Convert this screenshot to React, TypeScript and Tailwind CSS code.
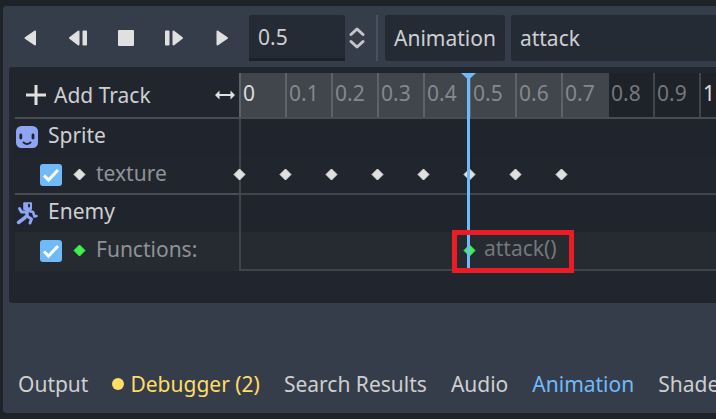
import type { ReactNode } from "react"
import { useState } from "react"

const STEP = 46

const ticks = ["0", "0.1", "0.2", "0.3", "0.4", "0.5", "0.6", "0.7", "0.8", "0.9", "1"]
const textureKeys = [0, 1, 2, 3, 4, 5, 6, 7]

const transport = [
  { label: "Play backwards", shape: <path d="M17 5.5 7.5 12l9.5 6.5z" /> },
  {
    label: "Play backwards from current position",
    shape: (
      <>
        <path d="M12.500 5.500 4 12l8.500 6.500z" />
        <path d="M17.500 5.500h2.500v13h-2.500z" />
      </>
    ),
  },
  { label: "Stop", shape: <path d="M5 5h14v14H5z" /> },
  {
    label: "Play from current position",
    shape: (
      <>
        <path d="M11.500 5.500 20 12l-8.500 6.500z" />
        <path d="M4 5.500h2.500v13H4z" />
      </>
    ),
  },
  { label: "Play", shape: <path d="M7.500 5.500 17 12l-9.500 6.500z" /> },
]

const tabs = ["Output", "Debugger (2)", "Search Results", "Audio", "Animation", "Shader"]

const Diamond = ({ className = "" }: { className?: string }) => (
  <svg viewBox="0 0 13 13" className={`size-[13px] shrink-0 ${className}`} fill="currentColor" stroke="currentColor" strokeLinejoin="round">
    <path d="M6.5 1 12 6.5 6.5 12 1 6.5z" />
  </svg>
)

const SpriteIcon = () => (
  <svg viewBox="0 0 24 24" className="size-6 shrink-0">
    <rect x="1" y="1" width="22" height="22" rx="5.5" fill="#8da5f3" />
    <g fill="none" stroke="#21262e" strokeLinecap="round">
      <path d="M5.8 10v3M18 10v3" strokeWidth="2.8" />
      <path d="M8.5 17.5q3.5 3 7 0" strokeWidth="2" />
    </g>
  </svg>
)

const BodyIcon = () => (
  <svg viewBox="0 0 24 24" className="size-6 shrink-0" fill="none" stroke="#8da5f3" strokeWidth="3" strokeLinecap="round" strokeLinejoin="round">
    <rect x="8.200" y="1.200" width="8.800" height="7.800" rx="1" fill="#8da5f3" stroke="none" />
    <path d="M4.500 7.500 6.500 11h5" />
    <path d="M12 9.500v5L9.500 17l-6 4.500" strokeWidth="3.500" />
    <path d="M12.500 15.500 16.500 18l-1.500 4" />
    <path d="M14 10l4 1 1.500 4.500 2-.5" strokeWidth="2.600" />
    <path d="M14 3.800v1.700" stroke="#21262e" strokeWidth="2" />
  </svg>
)

const GroupRow = ({ icon, name }: { icon: ReactNode; name: string }) => (
  <div className="flex h-[37px] bg-[#20242c]">
    <div className="flex w-[224px] shrink-0 items-center gap-[9px] pb-0.5">
      {icon}
      <span className="pb-1">{name}</span>
    </div>
    <div className="flex-1 border-l-2 border-[#40444b]" />
  </div>
)

interface TrackRowProps {
  name: string
  keyColor: string
  rowClass: string
  lineClass: string
  children: ReactNode
}

const TrackRow = ({ name, keyColor, rowClass, lineClass, children }: TrackRowProps) => {
  const [enabled, setEnabled] = useState(true)

  return (
    <div className={`flex h-[39px] ${rowClass}`}>
      <div className={`flex w-[224px] shrink-0 items-center border-b-2 pl-[25px] ${lineClass}`}>
        <label className="flex items-center">
          <span className="grid size-[22px]">
            <input
              type="checkbox"
              checked={enabled}
              onChange={(e) => setEnabled(e.target.checked)}
              className="peer col-start-1 row-start-1 size-[22px] appearance-none rounded-[3px] bg-[#252b34] checked:bg-[#70bafa]"
            />
            <svg
              viewBox="0 0 22 22"
              className="pointer-events-none invisible col-start-1 row-start-1 size-[22px] peer-checked:visible"
              fill="none"
              stroke="#fff"
              strokeWidth="3"
            >
              <path d="m4 11.5 4.500 4.500L18 6" />
            </svg>
          </span>
          <Diamond className={`ml-[11px] ${keyColor}`} />
          <span className="ml-2.5 pb-1 text-[#8f9296]">{name}</span>
        </label>
      </div>
      <div className="relative flex-1 border-b-2 border-l-2 border-[#40444b]">{children}</div>
    </div>
  )
}

export default function App() {
  const [length, setLength] = useState("0.5")
  const [animation, setAnimation] = useState("attack")
  const [activeTab, setActiveTab] = useState("Animation")

  return (
    <div className="flex min-h-screen flex-col overflow-hidden bg-[#1e2229] py-1.5 pl-[3px] font-['Noto_Sans',sans-serif] text-[21px] leading-[30px] whitespace-nowrap text-[#cdcfd2]">
      <main className="flex flex-1 flex-col rounded-l-[3px] bg-[#363d4a] pl-1.5">
        {/* Toolbar */}
        <div className="flex h-[61px] items-center pt-[3px]">
          <div className="-ml-[3px] flex shrink-0">
            {transport.map(({ label, shape }) => (
              <button key={label} aria-label={label} className="flex w-12 justify-center">
                <svg viewBox="0 0 24 24" className="size-6" fill="#e0e0e0" stroke="#e0e0e0" strokeWidth="2" strokeLinejoin="round">
                  {shape}
                </svg>
              </button>
            ))}
          </div>
          <input
            aria-label="Animation position"
            value={length}
            onChange={(e) => setLength(e.target.value)}
            className="ml-[3px] h-[46px] w-24 shrink-0 rounded-t-[3px] border-b-3 border-[#1c2127] bg-[#252b34] px-[9px] outline-none"
          />
          <svg viewBox="0 0 16 24" className="ml-1 h-6 w-4 shrink-0" fill="none" stroke="#c3c5c8" strokeWidth="3" strokeLinecap="round" strokeLinejoin="round">
            <path d="m2 8.500 6-5.500 6 5.500M2 15.500 8 21l6-5.500" />
          </svg>
          <div className="ml-[11px] h-[46px] w-0.5 shrink-0 bg-[#4a505c]" />
          <button className="ml-[7px] h-[46px] shrink-0 rounded-[3px] bg-[#252b34] px-[9px]">Animation</button>
          <input
            aria-label="Animation name"
            value={animation}
            onChange={(e) => setAnimation(e.target.value)}
            className="ml-1.5 h-[46px] min-w-0 flex-1 rounded-l-[3px] bg-[#252b34] px-[9px] outline-none"
          />
        </div>

        {/* Timeline */}
        <section className="overflow-hidden rounded-l-[3px] bg-[#21262e] pt-1.5 pb-8 pl-1.5">
          <div className="relative">
            <div className="flex h-[46px] border-b-2 border-[#484c54]">
              <div className="flex w-[224px] shrink-0 items-center justify-between pr-1 pl-[9px]">
                <button className="flex items-center gap-1.5">
                  <svg viewBox="0 0 24 24" className="size-6" stroke="#e0e0e0" strokeWidth="3">
                    <path d="M12 2v20M2 12h20" />
                  </svg>
                  Add Track
                </button>
                <svg viewBox="0 0 20 12" className="h-3 w-5" fill="#e0e0e0">
                  <path d="M0 6l4.500-4.500V5h11V1.500L20 6l-4.500 4.500V7h-11v3.500z" />
                </svg>
              </div>
              <div className="flex flex-1 overflow-hidden bg-[#1e2229]">
                {ticks.map((t, i) => (
                  <div
                    key={t}
                    className={`flex w-[46px] shrink-0 items-center border-l-2 pb-1 pl-0.5 ${
                      i < 8 ? "border-[#5e6167] bg-[#41454c]" : "border-[#41454c]"
                    } ${i % 10 === 0 ? "text-[#dcddde]" : i < 8 ? "text-[#85888c]" : "text-[#74777b]"}`}
                  >
                    {t}
                  </div>
                ))}
              </div>
            </div>

            <GroupRow icon={<SpriteIcon />} name="Sprite" />
            <TrackRow name="texture" keyColor="text-[#e0e0e0]" rowClass="bg-[#21262e]" lineClass="border-[#484c54]">
              {textureKeys.map((k) => (
                <span key={k} className="absolute top-3 -ml-2 text-[#e0e0e0]" style={{ left: k * STEP }}>
                  <Diamond />
                </span>
              ))}
            </TrackRow>
            <GroupRow icon={<BodyIcon />} name="Enemy" />
            <TrackRow name="Functions:" keyColor="text-[#3cf34b]" rowClass="bg-[#262b32]" lineClass="border-transparent">
              <span className="absolute top-px -ml-2 flex items-center gap-2 text-[#3cf34b]" style={{ left: 5 * STEP }}>
                <Diamond />
                <span className="pb-1 text-[#74777b]">attack()</span>
              </span>
            </TrackRow>

            {/* Playhead */}
            <div className="absolute top-0 bottom-0 left-[446px] flex w-[15px] flex-col items-center">
              <svg viewBox="0 0 15 7" className="h-[7px] w-[15px] shrink-0" fill="#70bafa">
                <path d="M0 0h15L7.500 7z" />
              </svg>
              <div className="-mt-[7px] w-[3px] flex-1 bg-[#70bafa]" />
            </div>
            <div className="absolute -bottom-0.5 left-[437px] h-[43px] w-[122px] border-5 border-[#ed1c24]" />
          </div>
        </section>

        {/* Bottom panel tabs */}
        <nav className="mt-auto flex gap-6 overflow-hidden pt-12 pb-3.5 pl-[9px]">
          {tabs.map((tab) => (
            <button
              key={tab}
              onClick={() => setActiveTab(tab)}
              className={`flex shrink-0 items-center gap-1.5 ${
                tab === activeTab ? "text-[#70bafa]" : tab.startsWith("Debugger") ? "text-[#ffdd65]" : "text-[#cdcfd2]"
              }`}
            >
              {tab.startsWith("Debugger") && <span className="size-3 rounded-full bg-[#ffdd65]" />}
              {tab}
            </button>
          ))}
        </nav>
      </main>
    </div>
  )
}
